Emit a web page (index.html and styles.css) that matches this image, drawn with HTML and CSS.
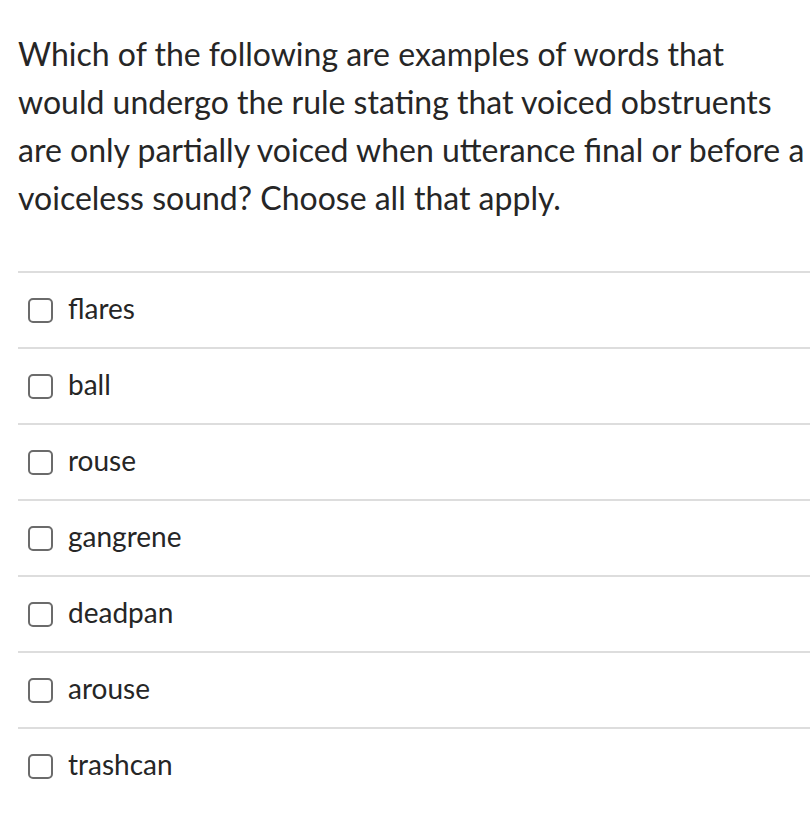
FILE: index.html
```html
<!DOCTYPE html>
<html>
<head>
<meta charset="utf-8">
<link rel="stylesheet" href="styles.css">
</head>
<body>
<div class="question">
  <p class="prompt">Which of the following are examples of words that would undergo the rule stating that voiced obstruents are only partially voiced when utterance final or before a voiceless sound? Choose all that apply.</p>
  <ul class="options">
    <li class="option"><span class="box"></span><span class="label">flares</span></li>
    <li class="option"><span class="box"></span><span class="label">ball</span></li>
    <li class="option"><span class="box"></span><span class="label">rouse</span></li>
    <li class="option"><span class="box"></span><span class="label">gangrene</span></li>
    <li class="option"><span class="box"></span><span class="label">deadpan</span></li>
    <li class="option"><span class="box"></span><span class="label">arouse</span></li>
    <li class="option"><span class="box"></span><span class="label">trashcan</span></li>
  </ul>
</div>
</body>
</html>
```
FILE: styles.css
```css
html, body {
  margin: 0;
  padding: 0;
  background: #ffffff;
}
body {
  font-family: Lato, "Open Sans", sans-serif;
  color: #262626;
  overflow: hidden;
}
.question {
  padding: 30px 0 0 18px;
}
.prompt {
  margin: 0;
  width: 792px;
  font-size: 32px;
  line-height: 48px;
}
.options {
  list-style: none;
  margin: 49px 0 0 0;
  padding: 0;
}
.option {
  display: flex;
  align-items: center;
  height: 74px;
  border-top: 2px solid #dddddd;
  padding-left: 10px;
  gap: 15px;
}
.box {
  width: 21px;
  height: 21px;
  border: 2.5px solid #6b6b6b;
  border-radius: 5px;
  flex: none;
}
.label {
  font-size: 28px;
  line-height: 32px;
  padding-bottom: 5px;
}
```
